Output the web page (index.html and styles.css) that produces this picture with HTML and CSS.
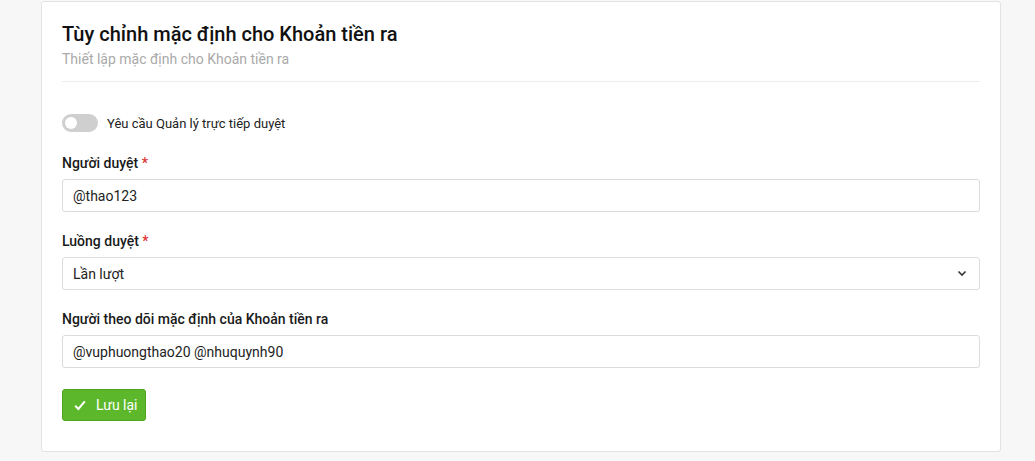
FILE: index.html
```html
<!DOCTYPE html>
<html lang="vi">
<head>
<meta charset="utf-8">
<link rel="stylesheet" href="styles.css">
</head>
<body>
<div class="page">
  <div class="card">
    <div class="card-head">
      <h2 class="title">Tùy chỉnh mặc định cho Khoản tiền ra</h2>
      <div class="subtitle">Thiết lập mặc định cho Khoản tiền ra</div>
    </div>
    <div class="toggle-row">
      <span class="toggle"><span class="knob"></span></span>
      <span class="toggle-label">Yêu cầu Quản lý trực tiếp duyệt</span>
    </div>
    <div class="field">
      <div class="label">Người duyệt <span class="req">*</span></div>
      <div class="input">@thao123</div>
    </div>
    <div class="field">
      <div class="label">Luồng duyệt <span class="req">*</span></div>
      <div class="input select">
        <span>Lần lượt</span>
        <svg class="chev" width="10" height="7" viewBox="0 0 10 7"><path d="M1.5 1.5 L5 5 L8.5 1.5" fill="none" stroke="#333" stroke-width="1.6"/></svg>
      </div>
    </div>
    <div class="field">
      <div class="label">Người theo dõi mặc định của Khoản tiền ra</div>
      <div class="input">@vuphuongthao20 @nhuquynh90</div>
    </div>
    <button class="btn">
      <svg width="12" height="11" viewBox="0 0 12 11"><path d="M1.2 5.8 L4.4 9 L10.8 1.4" fill="none" stroke="#fff" stroke-width="2"/></svg>
      <span>Lưu lại</span>
    </button>
  </div>
</div>
</body>
</html>
```
FILE: styles.css
```css
* { box-sizing: border-box; }
html, body { margin: 0; padding: 0; }
body {
  background: #f7f7f7;
  font-family: Roboto, "Noto Sans", sans-serif;
  color: #222;
  width: 1035px;
  height: 461px;
  overflow: hidden;
}
.page { padding: 1px 34px 0 41px; }
.card {
  width: 960px;
  height: 451px;
  background: #fff;
  border: 1px solid #e3e3e3;
  border-radius: 3px;
  padding: 20px 20px 30px 20px;
}
.card-head {
  border-bottom: 1px solid #ececec;
  padding-bottom: 13px;
}
.title {
  margin: 0;
  font-size: 20px;
  line-height: 24px;
  font-weight: 500;
  color: #111;
}
.subtitle {
  margin-top: 4px;
  font-size: 14px;
  line-height: 18px;
  color: #aaa;
}
.toggle-row {
  display: flex;
  align-items: center;
  margin-top: 32px;
  height: 18px;
}
.toggle {
  position: relative;
  width: 36px;
  height: 18px;
  border-radius: 9px;
  background: #cfcfcf;
  display: inline-block;
}
.knob {
  position: absolute;
  left: 3px;
  top: 3px;
  width: 12px;
  height: 12px;
  border-radius: 50%;
  background: #fff;
}
.toggle-label {
  margin-left: 9px;
  font-size: 13px;
  color: #222;
}
.field { margin-top: 23px; }
.field + .field { margin-top: 21px; }
.label {
  font-size: 14px;
  line-height: 16px;
  font-weight: 500;
  color: #1a1a1a;
  margin-bottom: 8px;
}
.req { color: #e03131; }
.input {
  height: 33px;
  border: 1px solid #dcdcdc;
  border-radius: 3px;
  padding: 0 10px;
  display: flex;
  align-items: center;
  font-size: 14px;
  color: #222;
}
.select { justify-content: space-between; padding-right: 12px; }
.chev { display: block; }
.btn {
  margin-top: 21px;
  height: 32px;
  width: 84px;
  border: 1px solid #4ea420;
  border-radius: 3px;
  background: #5cb82a;
  color: #fff;
  font-family: Roboto, "Noto Sans", sans-serif;
  font-size: 14px;
  display: flex;
  align-items: center;
  padding: 0 0 0 11px;
  gap: 10px;
  cursor: pointer;
}
.btn svg { display: block; }
```
